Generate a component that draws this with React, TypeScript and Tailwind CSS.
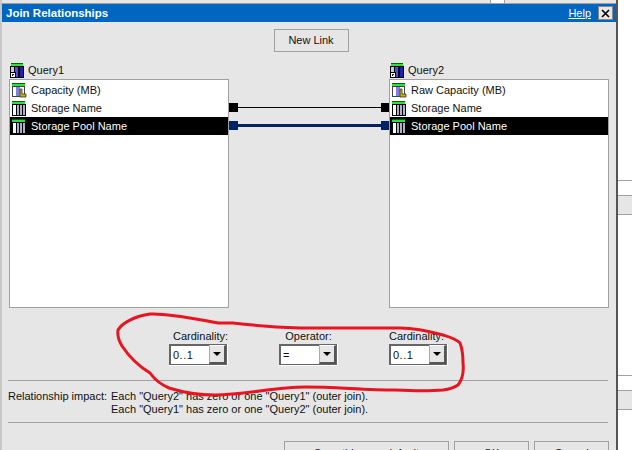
import { ReactNode } from 'react'

const font = { fontFamily: '"Liberation Sans", Arial, sans-serif' }

function QueryIcon() {
  return (
    <svg width="14" height="15" viewBox="0 0 14 15" className="shrink-0">
      <rect x="1" y="0" width="12" height="1" fill="#006600" />
      <rect x="1" y="1" width="12" height="2" fill="#33dd44" />
      <rect x="0" y="3" width="14" height="12" fill="#000" />
      <rect x="1" y="4" width="3" height="5" fill="#c8c8e8" />
      <rect x="5" y="4" width="3" height="10" fill="#5050d0" />
      <rect x="10" y="4" width="3" height="10" fill="#2020b0" />
      <rect x="0.5" y="9.5" width="5" height="5" fill="#fff" stroke="#000" strokeWidth="1" />
      <path d="M2.5 13 V11.5 H4" stroke="#000" fill="none" />
    </svg>
  )
}

function ColumnIcon({ measure }: { measure?: boolean }) {
  if (measure) {
    return (
      <svg width="15" height="15" viewBox="0 0 15 15" className="shrink-0">
        <rect x="0" y="0" width="13" height="1" fill="#006600" />
        <rect x="0" y="1" width="13" height="2" fill="#33dd44" />
        <rect x="0.5" y="3.5" width="12" height="10" fill="#fff" stroke="#444" />
        <rect x="4" y="4" width="4" height="9" fill="#8080e0" />
        <path d="M8 6 H10 V11 H14 V14 H8 Z" fill="#c8b400" stroke="#333" strokeWidth="0.8" />
      </svg>
    )
  }
  return (
    <svg width="15" height="15" viewBox="0 0 15 15" className="shrink-0">
      <rect x="0" y="0" width="13" height="1" fill="#006600" />
      <rect x="0" y="1" width="13" height="2" fill="#33dd44" />
      <rect x="0" y="3" width="14" height="12" fill="#000" />
      <rect x="1" y="4" width="3" height="10" fill="#fff" />
      <rect x="5" y="4" width="2" height="10" fill="#b0b0c8" />
      <rect x="8" y="4" width="2" height="10" fill="#b0b0c8" />
      <rect x="11" y="4" width="2" height="10" fill="#b0b0c8" />
    </svg>
  )
}

function Row({ label, measure, selected }: { label: string; measure?: boolean; selected?: boolean }) {
  return (
    <div className={'flex h-[18px] items-center gap-[4px] pl-[2px] text-[11px] ' + (selected ? 'bg-black text-white' : 'text-[#111]')}>
      <ColumnIcon measure={measure} />
      <span>{label}</span>
    </div>
  )
}

function QueryPanel({ title, first }: { title: string; first: string }) {
  return (
    <div className="flex w-[220px] flex-col">
      <div className="flex h-[17px] items-center gap-[4px] pb-[1px] pl-px text-[11px] text-[#111]">
        <QueryIcon />
        <span>{title}</span>
      </div>
      <div className="h-[229px] border border-[#a0a0a0] bg-white pt-px">
        <Row label={first} measure />
        <Row label="Storage Name" />
        <Row label="Storage Pool Name" selected />
      </div>
    </div>
  )
}

function Link({ navy }: { navy?: boolean }) {
  return (
    <div className="flex h-[9px] items-center">
      <div className={'h-[9px] w-[9px] ' + (navy ? 'bg-[#002266]' : 'bg-black')} />
      <div className={'flex-1 ' + (navy ? 'h-[3px] bg-[#002266]' : 'h-[1px] bg-black')} />
      <div className={'h-[9px] w-[8px] ' + (navy ? 'bg-[#002266]' : 'bg-black')} />
    </div>
  )
}

function Combo({ label, value, labelClass }: { label: string; value: string; labelClass: string }) {
  return (
    <div className="flex w-[59px] flex-col">
      <div className={'h-[15px] whitespace-nowrap text-[11px] leading-[15px] text-[#111] ' + labelClass}>{label}</div>
      <div className="h-[22px] border-r border-b border-white">
        <div className="flex h-full border border-[#666] bg-white">
          <div className="flex-1 border-t border-l border-[#666] pl-[2px] text-[11px] leading-[18px] tracking-[0.5px] text-[#111]">{value}</div>
          <div className="flex w-[17px] items-center justify-center border-t border-l border-r-2 border-b-2 border-t-white border-l-[#aaa] border-r-[#555] border-b-[#555] bg-[#e6e6e6]">
            <div className="h-0 w-0 border-x-[4px] border-t-[4px] border-x-transparent border-t-black" />
          </div>
        </div>
      </div>
    </div>
  )
}

function FooterButton({ width, children }: { width: string; children: ReactNode }) {
  return (
    <div className={'h-[23px] border border-[#a0a0a0] pt-[4px] text-center text-[11px] leading-[15px] text-[#111] ' + width}>
      {children}
    </div>
  )
}

export default function App() {
  return (
    <div className="relative flex h-[450px] w-[632px] items-start overflow-hidden bg-white" style={font}>
      {/* dialog, runs past the bottom of the shot */}
      <div className="flex w-[618px] shrink-0 flex-col border-r-2 border-l-2 border-[#555] border-l-[#c8c8c8] bg-[#e6e6e6]">
        <div className="flex h-[3px]">
          <div className="flex-1" />
          <div className="w-[15px] border-x border-[#a0a0a0] bg-white" />
          <div className="w-[111px]" />
        </div>
        <div className="h-px bg-[#a0a0a0]" />
        <div className="flex h-[18px] items-center justify-between bg-[#0066c0] pl-[4px] pr-[3px] text-white">
          <span className="pt-[2px] text-[11.5px] font-bold">Join Relationships</span>
          <div className="flex items-center gap-[7px]">
            <span className="text-[11px] underline">Help</span>
            <div className="flex h-[14px] w-[15px] items-center justify-center border border-[#888] bg-[#e6e6e6]">
              <svg width="9" height="9" viewBox="0 0 9 9">
                <path d="M1 1 L8 8 M8 1 L1 8" stroke="#000" strokeWidth="1.6" />
              </svg>
            </div>
          </div>
        </div>

        <div className="flex justify-center pt-[7px] pl-[4px]">
          <div className="flex h-[23px] w-[75px] items-center justify-center border border-[#a0a0a0] text-[11px] text-[#111]">New Link</div>
        </div>

        {/* query panels and links */}
        <div className="flex pl-[7px] pt-[10px]">
          <QueryPanel title="Query1" first="Capacity (MB)" />
          <div className="flex w-[160px] flex-col gap-[9px] pt-[41px]">
            <Link />
            <Link navy />
          </div>
          <QueryPanel title="Query2" first="Raw Capacity (MB)" />
        </div>

        {/* cardinality row */}
        <div className="flex gap-[51px] pl-[167px] pt-[21px]">
          <Combo label="Cardinality:" value="0..1" labelClass="pl-[4px]" />
          <Combo label="Operator:" value="=" labelClass="text-center" />
          <Combo label="Cardinality:" value="0..1" labelClass="" />
        </div>

        <div className="ml-[6px] mt-[14px] h-px w-[600px] bg-[#a0a0a0]" />
        <div className="flex pl-[6px] pt-[9px] text-[11px] leading-[13px] text-[#111]">
          <div className="w-[103px] whitespace-nowrap">Relationship impact:</div>
          <div className="whitespace-nowrap">
            <div>Each "Query2" has zero or one "Query1" (outer join).</div>
            <div>Each "Query1" has zero or one "Query2" (outer join).</div>
          </div>
        </div>
        <div className="ml-[6px] mt-[6px] h-px w-[600px] bg-[#a0a0a0]" />

        <div className="flex justify-end gap-[5px] pr-[7px] pt-[18px]">
          <FooterButton width="w-[165px]">Save this as a default</FooterButton>
          <FooterButton width="w-[75px]">OK</FooterButton>
          <FooterButton width="w-[75px]">Cancel</FooterButton>
        </div>
      </div>

      {/* whatever sits behind the dialog */}
      <div className="flex flex-1 flex-col">
        <div className="h-[180px]" />
        <div className="h-[15px] border-t border-[#a0a0a0]" />
        <div className="h-[20px] border-y border-[#a0a0a0] bg-[#e6e6e6]" />
        <div className="h-[160px]" />
        <div className="h-[15px] border-t border-[#a0a0a0]" />
        <div className="h-[20px] border-y border-[#a0a0a0] bg-[#e6e6e6]" />
      </div>

      {/* red hand-drawn marker over the cardinality row */}
      <svg width="632" height="450" className="pointer-events-none absolute left-0 top-0">
        <path
          d="M218 323 C200 320 170 313 150 314 C135 316 122 323 118 330 C117 337 119 341 122 346 C130 358 140 367 150 373 C155 380 162 385 169 388 C185 393 200 395 215 395 C245 395 275 387 306 387 C335 387 365 390 395 390 C415 391 432 391 443 390 C450 389 455 387 458 385 C462 380 464 372 463 363 C463 355 462 348 460 343 C455 338 450 337 443 335 C425 330 410 328 400 328 C370 328 335 328 300 328 C275 327 250 325 233 323 C228 323 222 323 218 323 Z"
          fill="none"
          stroke="#e8141f"
          strokeWidth="3"
        />
      </svg>
    </div>
  )
}
